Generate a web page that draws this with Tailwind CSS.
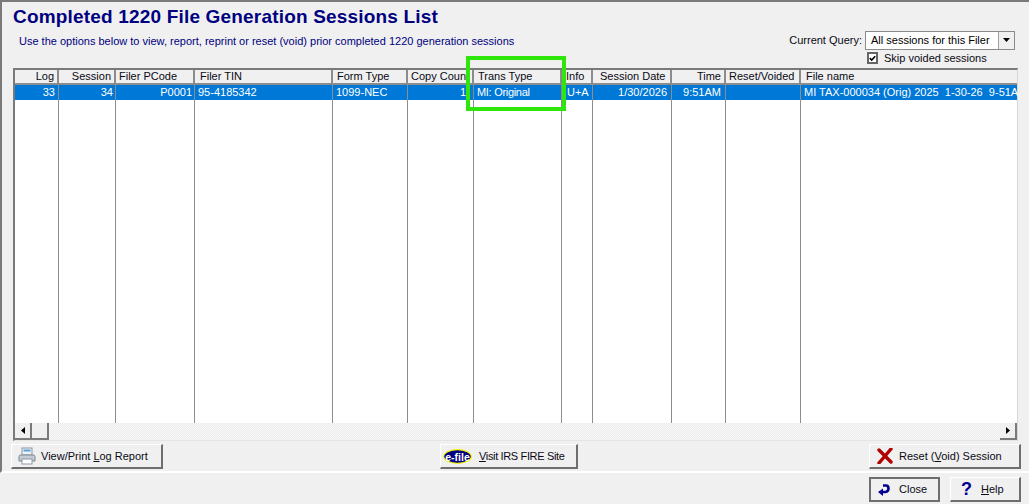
<!DOCTYPE html>
<html><head><meta charset="utf-8"><script src="https://cdn.jsdelivr.net/npm/@tailwindcss/browser@4"></script></head>
<body class="m-0">
<div class="relative w-[1029px] h-[504px] overflow-hidden bg-[#f0f0f0] font-['Liberation_Sans',Arial,sans-serif] text-[11px] text-[#0a0a14]">
  <!-- upper panel -->
  <div class="w-full h-[473px] border-t-2 border-l-2 border-b-2 border-t-[#7a7a7a] border-l-[#7a7a7a] border-b-white flex flex-col pl-[11px] pr-[9px]">
    <div class="h-[66px] flex justify-between shrink-0">
      <div class="pt-[3px]">
        <h1 class="font-bold text-[19px] leading-[24px] text-[#000080] tracking-[0.18px]">Completed 1220 File Generation Sessions List</h1>
        <p class="mt-[5px] pl-[6px] text-[#000080] leading-[14px]">Use the options below to view, report, reprint or reset (void) prior completed 1220 generation sessions</p>
      </div>
      <div class="pt-[28px] pr-[5px] flex flex-col">
        <div class="flex items-center gap-[3px] h-[20px]">
          <span>Current Query:</span>
          <div class="w-[150px] h-[19px] bg-white border border-[#8a8a8a] flex items-center justify-between">
            <span class="pl-[5px] text-black">All sessions for this Filer</span>
            <div class="w-[16px] h-[17px] bg-[#f0f0f0] border-l border-[#a0a0a0] flex items-center justify-center">
              <svg width="7" height="4" viewBox="0 0 7 4"><path d="M0 0h7L3.500 4z" fill="#000"/></svg>
            </div>
          </div>
        </div>
        <div class="flex items-center gap-[6px] h-[16px] ml-auto w-[150px] pl-[2px]">
          <div class="w-[11px] h-[12px] bg-white border-2 border-[#666] flex items-center justify-center">
            <svg width="9" height="9" viewBox="0 0 9 9"><path d="M1 4l2.500 2.500L8 1.500" fill="none" stroke="#000" stroke-width="2"/></svg>
          </div>
          <span>Skip voided sessions</span>
        </div>
      </div>
    </div>
    <!-- grid -->
    <div class="h-[373px] w-[1005px] border-t-2 border-l-2 border-[#7a7a7a] border-r border-r-[#d8d8d8] border-b border-b-[#e4e4e4] flex flex-col">
      <div class="flex-1 flex min-h-0 bg-white">
        <div class="w-[44px] flex flex-col border-r border-[#8c8c8c]">
          <div class="h-[15px] bg-[#f0f0f0] border-r border-b-2 border-[#8c8c8c] text-right pr-[3px] leading-[13px]">Log</div>
          <div class="h-[15px] bg-[#0078d7] text-white text-right pr-[3px] leading-[15px]">33</div>
        </div>
        <div class="w-[57px] flex flex-col border-r border-[#8c8c8c]">
          <div class="h-[15px] bg-[#f0f0f0] border-r border-b-2 border-[#8c8c8c] text-right pr-[3px] leading-[13px]">Session</div>
          <div class="h-[15px] bg-[#0078d7] text-white text-right pr-[2px] leading-[15px]">34</div>
        </div>
        <div class="w-[79px] flex flex-col border-r border-[#8c8c8c]">
          <div class="h-[15px] bg-[#f0f0f0] border-r border-b-2 border-[#8c8c8c] pl-[3px] leading-[13px]">Filer PCode</div>
          <div class="h-[15px] bg-[#0078d7] text-white text-right pr-[2px] leading-[15px]">P0001</div>
        </div>
        <div class="w-[138px] flex flex-col border-r border-[#8c8c8c]">
          <div class="h-[15px] bg-[#f0f0f0] border-r border-b-2 border-[#8c8c8c] pl-[5px] leading-[13px]">Filer TIN</div>
          <div class="h-[15px] bg-[#0078d7] text-white pl-[3px] leading-[15px]">95-4185342</div>
        </div>
        <div class="w-[75px] flex flex-col border-r border-[#8c8c8c]">
          <div class="h-[15px] bg-[#f0f0f0] border-r border-b-2 border-[#8c8c8c] pl-[4px] leading-[13px]">Form Type</div>
          <div class="h-[15px] bg-[#0078d7] text-white pl-[3px] leading-[15px]">1099-NEC</div>
        </div>
        <div class="w-[66px] flex flex-col border-r border-[#8c8c8c]">
          <div class="h-[15px] bg-[#f0f0f0] border-r border-b-2 border-[#8c8c8c] pl-[3px] leading-[13px] whitespace-nowrap overflow-hidden">Copy Count</div>
          <div class="h-[15px] bg-[#0078d7] text-white text-right pr-[7px] leading-[15px]">1</div>
        </div>
        <div class="w-[88px] flex flex-col border-r border-[#8c8c8c]">
          <div class="h-[15px] bg-[#f0f0f0] border-r border-b-2 border-[#8c8c8c] pl-[4px] leading-[13px]">Trans Type</div>
          <div class="h-[15px] bg-[#0078d7] text-white pl-[3px] leading-[15px] tracking-[-0.3px]">MI: Original</div>
        </div>
        <div class="w-[31px] flex flex-col border-r border-[#8c8c8c]">
          <div class="h-[15px] bg-[#f0f0f0] border-r border-b-2 border-[#8c8c8c] pl-[4px] leading-[13px]">Info</div>
          <div class="h-[15px] bg-[#0078d7] text-white pl-[5px] leading-[15px]">U+A</div>
        </div>
        <div class="w-[79px] flex flex-col border-r border-[#8c8c8c]">
          <div class="h-[15px] bg-[#f0f0f0] border-r border-b-2 border-[#8c8c8c] pl-[7px] leading-[13px]">Session Date</div>
          <div class="h-[15px] bg-[#0078d7] text-white text-right pr-[4px] leading-[15px]">1/30/2026</div>
        </div>
        <div class="w-[54px] flex flex-col border-r border-[#8c8c8c]">
          <div class="h-[15px] bg-[#f0f0f0] border-r border-b-2 border-[#8c8c8c] text-right pr-[3px] leading-[13px]">Time</div>
          <div class="h-[15px] bg-[#0078d7] text-white text-right pr-[4px] leading-[15px]">9:51AM</div>
        </div>
        <div class="w-[75px] flex flex-col border-r border-[#8c8c8c]">
          <div class="h-[15px] bg-[#f0f0f0] border-r border-b-2 border-[#8c8c8c] pl-[3px] leading-[13px]">Reset/Voided</div>
          <div class="h-[15px] bg-[#0078d7] text-white leading-[15px]">&nbsp;</div>
        </div>
        <div class="flex-1 min-w-0 flex flex-col">
          <div class="h-[15px] bg-[#f0f0f0] border-b-2 border-[#8c8c8c] pl-[5px] leading-[13px]">File name</div>
          <div class="h-[15px] bg-[#0078d7] text-white pl-[3px] leading-[15px] whitespace-pre">MI TAX-000034 (Orig) 2025  1-30-26  9-51A</div>
        </div>
      </div>
      <!-- horizontal scrollbar -->
      <div class="h-[17px] shrink-0 flex justify-between bg-[#f0f0f0] bg-[repeating-conic-gradient(#e8e8e8_0_25%,#fbfbfb_0_50%)] bg-[length:2px_2px]">
        <div class="flex">
          <div class="w-[17px] h-[17px] bg-[#f0f0f0] border-r-2 border-b-2 border-[#7a7a7a] flex items-center justify-center"><svg width="4" height="7" viewBox="0 0 4 7"><path d="M4 0v7L0 3.500z"/></svg></div>
          <div class="w-[17px] h-[17px] bg-[#f0f0f0] border-r-2 border-b-2 border-[#7a7a7a]"></div>
        </div>
        <div class="w-[17px] h-[17px] bg-[#f0f0f0] border-r-2 border-b-2 border-[#7a7a7a] flex items-center justify-center"><svg width="4" height="7" viewBox="0 0 4 7"><path d="M0 0v7l4-3.500z"/></svg></div>
      </div>
    </div>
    <!-- action buttons -->
    <div class="mt-[3px] -ml-[2px] flex items-start whitespace-nowrap">
      <button class="shrink-0 w-[152px] h-[25px] bg-[#f0f0f0] border-t border-l border-t-white border-l-white border-r-2 border-b-2 border-r-[#6e6e6e] border-b-[#6e6e6e] flex items-center pl-[6px] gap-[5px]">
        <svg width="18" height="18" viewBox="0 0 18 18"><rect x="4" y="1" width="10" height="7" fill="#eef2f6" stroke="#8a97a6"/><path d="M5.500 3.500h7" stroke="#5aa2d6" stroke-width="2"/><path d="M1 9.500Q1 8 3 8h12q2 0 2 1.500V14H1z" fill="#c5ccd4" stroke="#7d8894"/><rect x="4" y="12" width="10" height="5" fill="#fff" stroke="#8a97a6"/></svg>
        <span><span>View/Print </span><span class="underline">L</span><span>og Report</span></span>
      </button>
      <button class="shrink-0 ml-[277px] w-[138px] h-[25px] bg-[#f0f0f0] border-t border-l border-t-white border-l-white border-r-2 border-b-2 border-r-[#6e6e6e] border-b-[#6e6e6e] flex items-center pl-[2px] gap-[7px]">
        <svg width="29" height="15" viewBox="0 0 29 15"><ellipse cx="14.500" cy="7.500" rx="13.800" ry="6.800" fill="#000080" stroke="#f5f500" stroke-width="1.200"/><text x="14.500" y="11.500" text-anchor="middle" fill="#fff" font-family="Liberation Sans" font-weight="bold" font-size="10.500">e-file</text></svg>
        <span class="tracking-[-0.35px]"><span class="underline">V</span><span>isit IRS FIRE Site</span></span>
      </button>
      <button class="shrink-0 ml-[291px] w-[152px] h-[25px] bg-[#f0f0f0] border-t border-l border-t-white border-l-white border-r-2 border-b-2 border-r-[#6e6e6e] border-b-[#6e6e6e] flex items-center pl-[7px] gap-[6px]">
        <svg width="16" height="16" viewBox="0 0 16 16"><path d="M2 2l12 12M14 1L2 15" stroke="#b00000" stroke-width="3.400" stroke-linecap="round"/></svg>
        <span><span>Reset (</span><span class="underline">V</span><span>oid) Session</span></span>
      </button>
    </div>
  </div>
  <!-- footer buttons -->
  <div class="flex justify-end gap-[10px] pt-[4px] pr-[8px]">
    <button class="w-[71px] h-[25px] bg-[#f0f0f0] border-2 border-[#6e6e6e] flex items-center pl-[7px] gap-[9px]">
      <svg width="12" height="12" viewBox="0 0 12 12"><path d="M5 1.500h3q2.500 0 2.500 3T7.500 8H4" fill="none" stroke="#000090" stroke-width="2.600"/><path d="M5 4.500v7.500L0 8z" fill="#000090"/></svg>
      <span>Close</span>
    </button>
    <button class="w-[71px] h-[25px] bg-[#f0f0f0] border-t border-l border-t-white border-l-white border-r-2 border-b-2 border-r-[#6e6e6e] border-b-[#6e6e6e] flex items-center pl-[10px] gap-[9px]">
      <span class="font-bold text-[#000090] text-[18px] leading-[20px]">?</span>
      <span><span class="underline">H</span><span>elp</span></span>
    </button>
  </div>
  <!-- highlight annotation -->
  <div class="absolute left-[466px] top-[56px] w-[100px] h-[55px] border-[4px] border-[#2ee60a]"></div>
</div>
</body></html>
